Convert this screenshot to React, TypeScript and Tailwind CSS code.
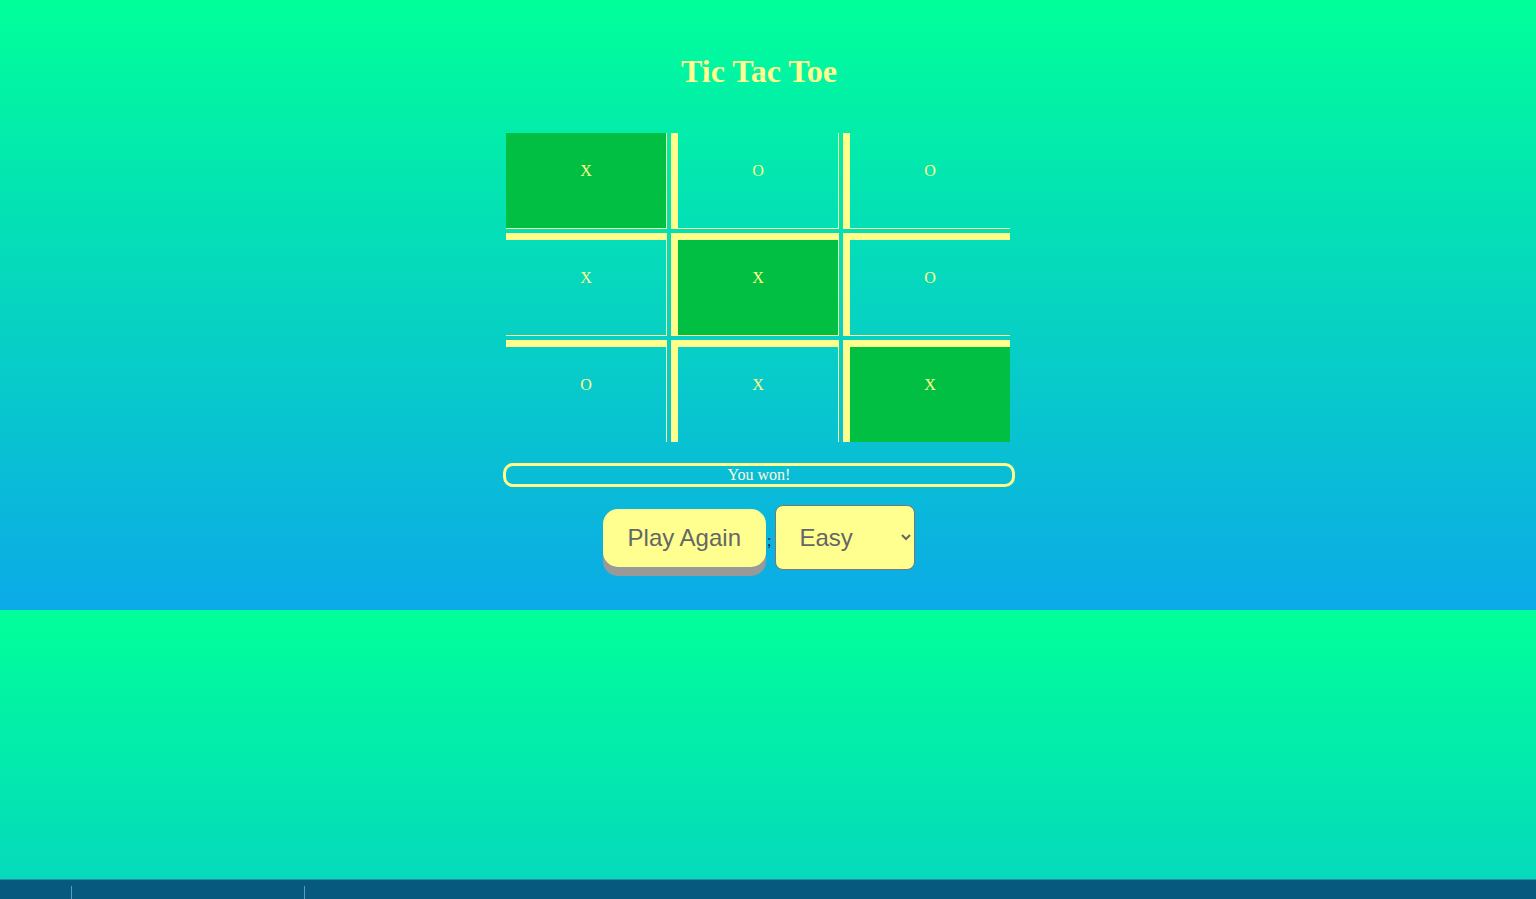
import { useState } from "react";

const BOARD = ["X", "O", "O", "X", "X", "O", "O", "X", "X"];
const WIN_LINE = [0, 4, 8];

function cellClass(i: number) {
  const col = i % 3;
  const row = Math.floor(i / 3);
  const parts = [
    "border-solid border-[#ffff8c] border-r-[1px] border-b-[1px] pt-[26px] text-center text-[16px] text-[#ffff8c]",
  ];
  if (col > 0) parts.push("border-l-[7px]");
  if (row > 0) parts.push("border-t-[7px]");
  if (WIN_LINE.includes(i)) parts.push("bg-[#00bf43]");
  return parts.join(" ");
}

export default function App() {
  const [level, setLevel] = useState("easy");

  return (
    <div className="min-h-[899px] flex flex-col font-['Liberation_Serif',serif]">
      <div className="h-[879px] bg-[linear-gradient(to_bottom,#00ff99,#0caae8)] bg-[length:100%_610px] bg-repeat-y">
        <div className="h-[610px] pr-[18px] flex flex-col items-center">
          {/* Title */}
          <h1 className="pt-[53px] text-[32px] leading-[36px] font-bold text-[#ffff91]">
            Tic Tac Toe
          </h1>

          {/* Board */}
          <div className="mt-[44px] mr-[2px] w-[504px] h-[309px] overflow-hidden">
            <div className="grid w-[505px] grid-cols-[161px_168px_168px] grid-rows-[96px_103px_103px] gap-[4px]">
              {BOARD.map((v, i) => (
                <div key={i} className={cellClass(i)}>
                  {v}
                </div>
              ))}
            </div>
          </div>

          {/* Status */}
          <div className="mt-[21px] w-[512px] h-[24px] border-[3px] border-[#ffff8c] rounded-[10px] text-center text-[16px] leading-[18px] text-[#fafae0]">
            You won!
          </div>

          {/* Controls */}
          <div className="mt-[18px] flex items-baseline font-['Liberation_Sans',sans-serif]">
            <button className="px-[25px] py-[15px] bg-[#ffff90] text-[#666] text-[24px] leading-[28px] rounded-[15px] shadow-[0_9px_#999]">
              Play Again
            </button>
            <span className="ml-[1px] mr-[4px] text-[16px] text-[#222] font-['Liberation_Serif',serif]">;</span>
            <select
              value={level}
              onChange={(e) => setLevel(e.target.value)}
              className="w-[140px] h-[65px] pl-[19px] pr-[6px] bg-[#ffff90] text-[#666] text-[24px] border border-[#777] rounded-[8px]"
            >
              <option value="easy">Easy</option>
              <option value="medium">Medium</option>
              <option value="hard">Hard</option>
            </select>
          </div>
        </div>
      </div>

      {/* Bottom bar */}
      <div className="h-[20px] bg-[#075a7e] border-t border-[#2b8aa5] flex pt-[6px]">
        <div className="w-[71px]" />
        <div className="w-[233px] border-l border-[#5d9bb8]" />
        <div className="border-l border-[#5d9bb8]" />
      </div>
    </div>
  );
}
